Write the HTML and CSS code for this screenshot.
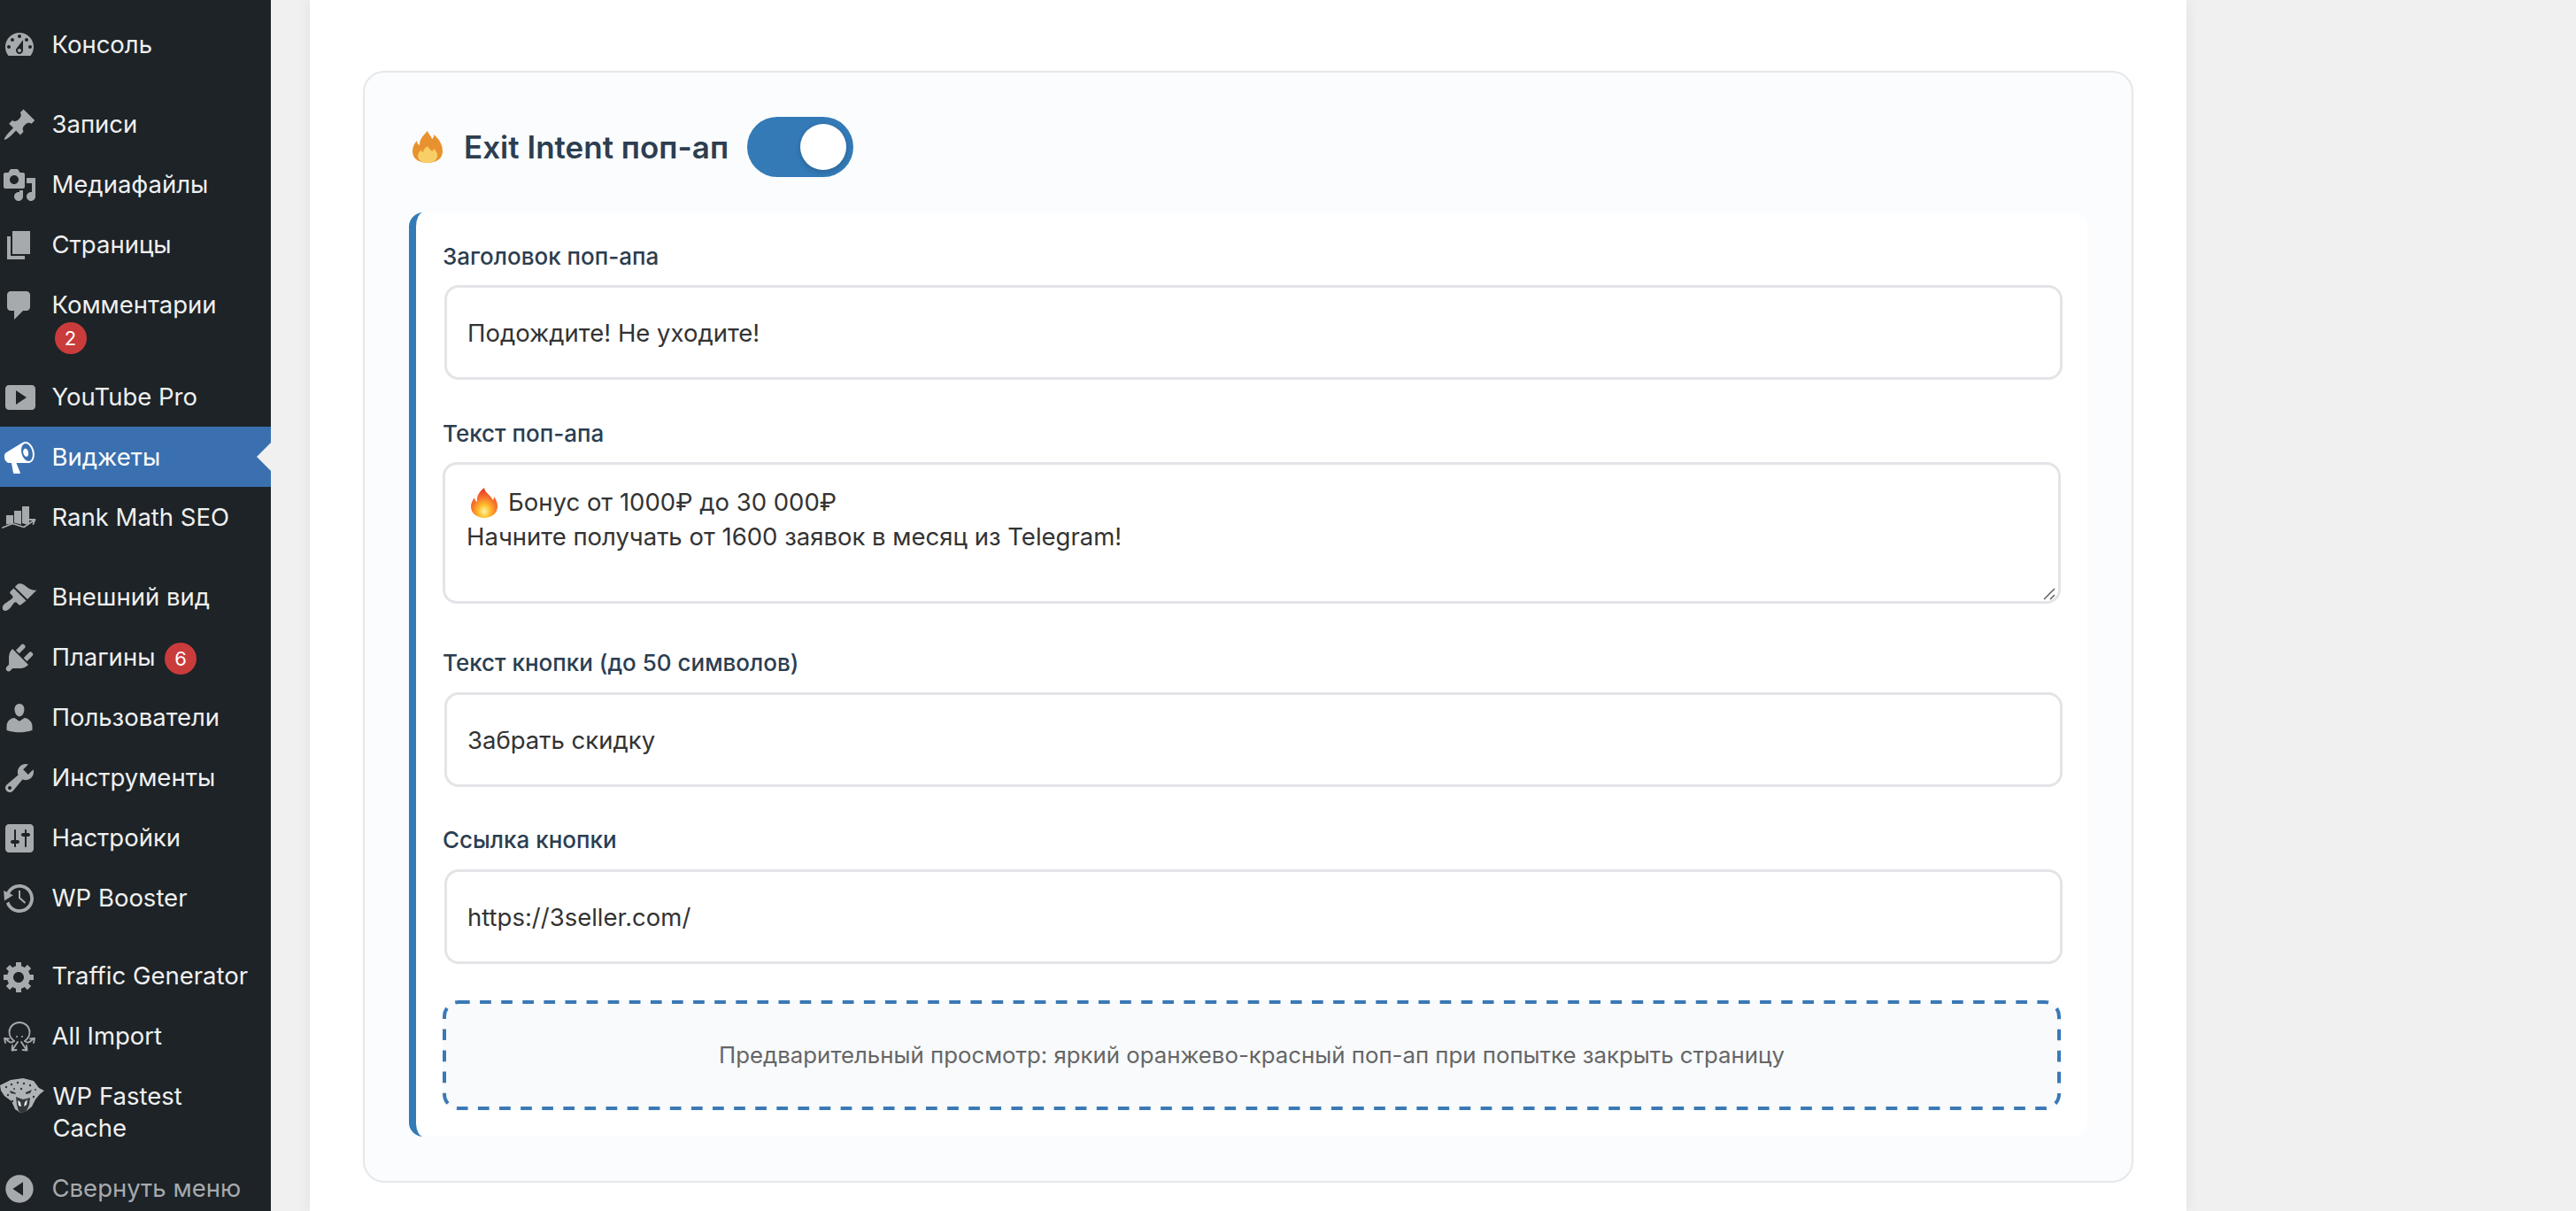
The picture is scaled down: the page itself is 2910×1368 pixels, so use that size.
FILE: index.html
```html
<!DOCTYPE html>
<html lang="ru">
<head>
<meta charset="utf-8">
<title>Exit Intent поп-ап</title>
<link rel="stylesheet" href="styles.css">
</head>
<body>
<div class="page">
  <nav class="sidebar">
    <a class="item"><svg class="icon" viewBox="0 0 20 20"><path d="M3.76 16h12.48c1.1-1.37 1.76-3.11 1.76-5 0-4.42-3.58-8-8-8s-8 3.58-8 8c0 1.89.66 3.63 1.76 5zM10 4c.55 0 1 .45 1 1s-.45 1-1 1-1-.45-1-1 .45-1 1-1zM6 6c.55 0 1 .45 1 1s-.45 1-1 1-1-.45-1-1 .45-1 1-1zm8 0c.55 0 1 .45 1 1s-.45 1-1 1-1-.45-1-1 .45-1 1-1zm-5.37 5.55L12 7v6c0 1.1-.9 2-2 2s-2-.9-2-2c0-.57.24-1.08.63-1.45zM4 10c.55 0 1 .45 1 1s-.45 1-1 1-1-.45-1-1 .45-1 1-1zm12 0c.55 0 1 .45 1 1s-.45 1-1 1-1-.45-1-1 .45-1 1-1zm-5 3c0-.55-.45-1-1-1s-1 .45-1 1 .45 1 1 1 1-.45 1-1z"/></svg><span class="label">Консоль</span></a>
    <div class="sep-a"></div>
    <a class="item"><svg class="icon" viewBox="0 0 20 20"><path d="M10.44 3.02l1.82-1.82 6.36 6.35-1.83 1.82c-1.05-.68-2.48-.57-3.41.36l-.75.75c-.92.93-1.04 2.35-.35 3.41l-1.83 1.82-2.41-2.41-2.8 2.79c-.42.42-3.38 2.71-3.8 2.29s1.86-3.39 2.28-3.81l2.79-2.79L4.1 9.36l1.83-1.82c1.05.69 2.48.57 3.4-.36l.75-.75c.93-.92 1.05-2.35.36-3.41z"/></svg><span class="label">Записи</span></a>
    <a class="item"><svg class="icon" viewBox="0 0 20 20"><path d="M13 11V4c0-.55-.45-1-1-1h-1.67L9 1H5L3.67 3H2c-.55 0-1 .45-1 1v7c0 .55.45 1 1 1h10c.55 0 1-.45 1-1zM7 4.500c1.380 0 2.500 1.120 2.500 2.500S8.380 9.500 7 9.500 4.500 8.380 4.500 7 5.620 4.500 7 4.500zM14 6h5v10.500c0 1.380-1.120 2.500-2.500 2.500S14 17.880 14 16.500s1.120-2.500 2.500-2.500c.17 0 .34.02.5.05V9h-3V6zm-4 8.050V13h2v3.500c0 1.380-1.120 2.500-2.500 2.500S7 17.880 7 16.500 8.120 14 9.500 14c.17 0 .34.02.5.05z"/></svg><span class="label">Медиафайлы</span></a>
    <a class="item"><svg class="icon" viewBox="0 0 20 20"><path d="M6 15V2h10v13H6zm-1 1h8v2H3V5h2v11z"/></svg><span class="label">Страницы</span></a>
    <a class="item"><svg class="icon" viewBox="0 0 20 20"><path d="M5 2h9c1.100 0 2 .9 2 2v7c0 1.100-.9 2-2 2h-2l-5 5v-5H5c-1.100 0-2-.9-2-2V4c0-1.100.9-2 2-2z"/></svg><span class="label">Комментарии <span class="badge">2</span></span></a>
    <a class="item"><svg class="icon" viewBox="0 0 20 20"><path d="M19 15V5c0-1.100-.9-2-2-2H4c-1.100 0-2 .9-2 2v10c0 1.100.9 2 2 2h13c1.100 0 2-.9 2-2zM8 14V6l6 4z"/></svg><span class="label">YouTube Pro</span></a>
    <a class="item current"><svg class="icon" viewBox="0 0 20 20"><path d="M18.150 5.940c.46 1.620.38 3.220-.02 4.480-.42 1.280-1.260 2.180-2.300 2.480-.16.06-.26.06-.4.06-.06.02-.12.02-.18.02-.06.02-.14.02-.22.02h-6.800l2.220 5.500c.02.14-.06.26-.14.34-.08.1-.24.16-.34.16H6.950c-.1 0-.26-.06-.34-.16-.08-.08-.16-.2-.14-.34l-1-5.500H4.250l-.02-.02c-.5.06-1.080-.18-1.540-.62s-.88-1.080-1.060-1.880c-.24-.8-.2-1.560-.02-2.200.18-.62.58-1.080 1.060-1.300l.02-.02 9-5.400c.1-.06.18-.1.24-.16.06-.04.14-.08.24-.12.16-.08.28-.12.5-.18 1.040-.3 2.240.1 3.220.98s1.840 2.240 2.260 3.860zm-2.580 5.980h-.02c.4-.1.74-.34 1.040-.7.58-.7.86-1.760.86-3.040-.02-.64-.1-1.300-.28-1.980-.34-1.360-1.020-2.500-1.780-3.240s-1.680-1.100-2.460-.88c-.82.22-1.400.96-1.700 2-.32 1.040-.28 2.360.06 3.720.38 1.360 1 2.500 1.800 3.240.78.74 1.620 1.100 2.480.88zm-2.540-7.080c.22-.04.42-.02.62.04.38.16.76.48 1.020 1s.42 1.200.42 1.780c0 .3-.04.56-.12.8-.18.48-.44.84-.86.94-.34.1-.8-.06-1.140-.4s-.64-.86-.78-1.500c-.18-.62-.12-1.240.02-1.720s.48-.84.82-.94z"/></svg><span class="label">Виджеты</span></a>
    <a class="item"><svg class="icon" viewBox="0 0 40 40"><path d="M5 17h8v9l-8 1.500zM14 12h8v15.500l-8-2zM23 7h8v19l-3 1.500-5-1.500z"/><path class="thin" d="M1 31l11-4.500 13 4 11-7.500M31.500 22h6l-2 5"/></svg><span class="label">Rank Math SEO</span></a>
    <div class="sep-b"></div>
    <a class="item"><svg class="icon" viewBox="0 0 20 20"><path d="M14.480 11.060L7.410 3.990l1.500-1.500c.5-.56 2.300-.47 3.510.32 1.210.8 1.430 1.280 2.910 2.100 1.180.64 2.450 1.260 4.450.85zm-.71.71L6.700 4.700 4.930 6.470c-.39.39-.39 1.020 0 1.410l1.060 1.060c.39.39.39 1.030 0 1.420-.6.6-1.430 1.110-2.210 1.690-.35.26-.7.53-1.010.84C1.430 13.230.4 14.850.4 15.820c0 .96.52 1.650 1.480 1.650.97 0 2.300-1 2.650-1.360.31-.31.58-.66.84-1.010.58-.78 1.090-1.610 1.690-2.210.39-.39 1.020-.39 1.410 0l1.060 1.060c.39.39 1.020.39 1.410 0z"/></svg><span class="label">Внешний вид</span></a>
    <a class="item"><svg class="icon" viewBox="0 0 20 20"><path d="M13.110 4.360L9.870 7.600 8 5.730l3.240-3.240c.35-.34 1.050-.2 1.560.32.52.51.66 1.210.31 1.550zm-8 1.770l.91-1.120 9.010 9.010-1.190.84c-.71.71-2.630 1.160-3.820 1.160H6.140L4.900 17.260c-.59.59-1.540.59-2.120 0-.59-.58-.59-1.530 0-2.120l1.240-1.240v-3.880c0-1.130.4-3.190 1.090-3.890zm7.260 3.970l3.240-3.240c.34-.35 1.040-.21 1.550.31.52.51.66 1.210.31 1.550l-3.240 3.250z"/></svg><span class="label">Плагины <span class="badge">6</span></span></a>
    <a class="item"><svg class="icon" viewBox="0 0 20 20"><path d="M10 9.250c-2.270 0-2.730-3.440-2.730-3.440C7 4.020 7.820 2 9.970 2c2.160 0 2.980 2.020 2.710 3.810 0 0-.41 3.440-2.680 3.440zm0 2.570L12.720 10c2.390 0 4.520 2.330 4.520 4.530v2.490s-3.650 1.130-7.240 1.130c-3.650 0-7.240-1.130-7.240-1.130v-2.490c0-2.250 1.940-4.480 4.470-4.480z"/></svg><span class="label">Пользователи</span></a>
    <a class="item"><svg class="icon" viewBox="0 0 20 20"><path d="M16.680 9.770c-1.340 1.340-3.300 1.670-4.950.99l-5.410 6.520c-.99.99-2.590.99-3.580 0s-.99-2.59 0-3.570l6.520-5.420c-.68-1.650-.35-3.610.99-4.950 1.280-1.280 3.120-1.620 4.720-1.060l-2.890 2.890 2.820 2.820 2.860-2.870c.53 1.580.18 3.390-1.080 4.650zM3.810 16.210c.4.39 1.040.39 1.430 0 .4-.4.4-1.040 0-1.430-.39-.4-1.030-.4-1.430 0-.39.39-.39 1.030 0 1.430z"/></svg><span class="label">Инструменты</span></a>
    <a class="item"><svg class="icon" viewBox="0 0 20 20"><path d="M18 16V4c0-1.100-.9-2-2-2H4c-1.100 0-2 .9-2 2v12c0 1.100.9 2 2 2h12c1.100 0 2-.9 2-2zM8 11h1c.55 0 1 .45 1 1s-.45 1-1 1H8v1.500c0 .28-.22.5-.5.5s-.5-.22-.5-.5V13H6c-.55 0-1-.45-1-1s.45-1 1-1h1V5.500c0-.28.22-.5.5-.5s.5.22.5.5V11zm5-2h-1c-.55 0-1-.45-1-1s.45-1 1-1h1V5.500c0-.28.22-.5.5-.5s.5.22.5.5V7h1c.55 0 1 .45 1 1s-.45 1-1 1h-1v5.500c0 .28-.22.5-.5.5s-.5-.22-.5-.5V9z"/></svg><span class="label">Настройки</span></a>
    <a class="item"><svg class="icon" viewBox="0 0 20 20"><path d="M13.650 2.880c3.930 2.010 5.480 6.840 3.470 10.770s-6.830 5.480-10.770 3.470c-1.870-.96-3.200-2.560-3.860-4.400l1.640-1.030c.45 1.570 1.520 2.950 3.080 3.760 3.010 1.540 6.690.35 8.230-2.660 1.550-3.010.36-6.690-2.650-8.240C9.780 3.010 6.100 4.200 4.560 7.210l1.880.97-4.950 3.080-.39-5.820 1.780.91C4.890 2.420 9.720.87 13.650 2.880zM9.500 5.500h1v3.900l3.100 2.700-.7.750-3.400-3z"/></svg><span class="label">WP Booster</span></a>
    <div class="sep-c"></div>
    <a class="item"><svg class="icon" viewBox="0 0 20 20"><path d="M18 12h-2.180c-.17.7-.44 1.350-.81 1.930l1.540 1.540-2.100 2.100-1.540-1.540c-.58.36-1.230.63-1.910.79V19H8v-2.180c-.68-.16-1.330-.43-1.910-.79l-1.540 1.540-2.120-2.120 1.540-1.540c-.36-.58-.63-1.230-.79-1.910H1V9.030h2.170c.16-.7.44-1.350.8-1.940L2.430 5.550l2.100-2.100 1.540 1.540c.58-.37 1.240-.64 1.930-.81V2h3v2.180c.68.16 1.330.43 1.910.79l1.540-1.540 2.120 2.120-1.540 1.540c.36.59.64 1.240.8 1.940H18V12zm-8.500 1.500c1.660 0 3-1.340 3-3s-1.340-3-3-3-3 1.340-3 3 1.340 3 3 3z"/></svg><span class="label">Traffic Generator</span></a>
    <a class="item"><svg class="icon" viewBox="0 0 40 40"><g class="thin"><path d="M14 25c-4-3-5.500-6-5.500-10C8.500 9 13.500 4 20 4s11.500 5 11.500 11c0 4-1.500 7-5.500 10"/><path d="M14 25c-2 2.500-6 2-10-3M26 25c2 2.500 6 2 10-3M4 27l-1-5 5 .5M36 27l1-5-5 .5M18 26l-6 9M22 26l6 9M12 30l-.5 5.500 5-.5M28 30l.5 5.500-5-.5"/></g><circle cx="17" cy="20" r="1"/><circle cx="23" cy="20" r="1"/></svg><span class="label">All Import</span></a>
    <a class="item"><svg class="icon cat" viewBox="0 0 50 44"><path class="cat-fur" d="M0 9l12-6 14-2 12 3 6 8 6 3-5 4-5 6-4 8-6 5-7 2-6-4-4-9-8-6-4-6z"/><path class="cat-dark" d="M18 22l8 3 8-2-1 8-3 7-5 3-4-3-2-7zM11 15l6 2 1 2-6-1zM29 17l7-3-2 4-5 1z"/><path class="cat-light" d="M20 26l3 2 1 5-3-1zM31 25l-3 3-1 5 3-2z"/><g class="cat-dark"><circle cx="7" cy="11" r="1.200"/><circle cx="13" cy="8" r="1.200"/><circle cx="20" cy="6" r="1.200"/><circle cx="27" cy="7" r="1.200"/><circle cx="34" cy="9" r="1.200"/><circle cx="9" cy="20" r="1.200"/><circle cx="14" cy="27" r="1.200"/><circle cx="24" cy="13" r="1.200"/><circle cx="38" cy="22" r="1.200"/><circle cx="16" cy="13" r="1"/><circle cx="40" cy="14" r="1"/></g></svg><span class="label">WP Fastest Cache</span></a>
    <a class="item muted"><svg class="icon" viewBox="0 0 20 20"><path d="M10 2.160c4.330 0 7.840 3.510 7.840 7.840s-3.510 7.840-7.840 7.840S2.160 14.330 2.160 10 5.710 2.160 10 2.160zm2 11.720V6.120L6.180 9.960z"/></svg><span class="label">Свернуть меню</span></a>
  </nav>
  <main class="main">
    <div class="card">
      <section class="panel">
        <header class="panel-head">
          <svg class="head-flame" viewBox="0 0 34 36"><path class="flame-o" d="M17 0c1 4 4 5 5 9 2-1 2-3 2-5 6 5 10 11 10 19 0 8-7 13-17 13S0 31 0 23c0-5 2-9 5-12 0 3 1 4 3 5 0-7 4-11 9-16z"/><path class="flame-y" d="M17 17c1 3 4 4 5 6 1-1 2-2 2-3 3 3 4 5 4 8 0 5-5 8-11 8S6 33 6 28c0-3 2-5 4-7 0 2 1 3 2 3 0-3 2-5 5-7z"/></svg>
          <h2 class="panel-title">Exit Intent поп-ап</h2>
          <span class="toggle"><span class="thumb"></span></span>
        </header>
        <div class="box">
          <div class="field field-1">
            <div class="field-label">Заголовок поп-апа</div>
            <div class="input">Подождите! Не уходите!</div>
          </div>
          <div class="field field-2">
            <div class="field-label">Текст поп-апа</div>
            <div class="textarea">
              <div class="line line-first"><svg class="text-flame" viewBox="0 0 30 34"><defs><radialGradient id="fg" cx="50%" cy="78%" r="70%"><stop offset="0" stop-color="#fff3a8"/><stop offset=".3" stop-color="#ffc02e"/><stop offset=".65" stop-color="#f7762a"/><stop offset="1" stop-color="#ea3f26"/></radialGradient></defs><path fill="url(#fg)" d="M15 0c1 6 7 8 10 14 1-1 1-3 1-4 3 4 4 8 4 11 0 8-7 13-15 13S0 29 0 21c0-4 2-7 4-10 0 2 1 4 3 5C6 9 10 4 15 0z"/></svg><span>Бонус от 1000₽ до 30 000₽</span></div>
              <div class="line">Начните получать от 1600 заявок в месяц из Telegram!</div>
              <svg class="resizer" viewBox="0 0 14 14"><path d="M1 13L13 1M8 13l5-5"/></svg>
            </div>
          </div>
          <div class="field field-3">
            <div class="field-label">Текст кнопки (до 50 символов)</div>
            <div class="input">Забрать скидку</div>
          </div>
          <div class="field field-4">
            <div class="field-label">Ссылка кнопки</div>
            <div class="input">https://3seller.com/</div>
          </div>
          <div class="preview">
            <svg class="dash" viewBox="0 0 1828 124"><rect x="2" y="2" width="1824" height="120" rx="16" ry="16"/></svg>
            Предварительный просмотр: яркий оранжево-красный поп-ап при попытке закрыть страницу
          </div>
        </div>
      </section>
    </div>
  </main>
</div>
</body>
</html>
```
FILE: styles.css
```css
* { box-sizing: border-box; }
html, body { margin: 0; height: 100%; overflow: hidden; }
body { background: #f0f0f0; font-family: Inter, "Liberation Sans", sans-serif; }
.page { display: flex; height: 1368px; overflow: hidden; }

.sidebar { width: 306px; flex: none; height: 1368px; overflow: hidden; background: #1d2327; padding-top: 16px; }
.item { position: relative; display: flex; align-items: flex-start; gap: 16.5px; padding: 16px 0 16px 2px; color: #f0f0f0; font-size: 27.5px; line-height: 36px; }
.icon { width: 40px; height: 40px; flex: none; margin: -1px 0 -3px; fill: #a7aaad; }
.thin { fill: none; stroke: #a7aaad; stroke-width: 1.8; stroke-linecap: round; stroke-linejoin: round; }
.label { display: block; max-width: 224px; }
.badge { display: inline-block; width: 36px; height: 36px; margin: 2px 0 -2px 3px; border-radius: 50%; background: #c93c3b; color: #fff; font-size: 22px; line-height: 36px; text-align: center; vertical-align: top; }
.current { background: #3a70b0; color: #fff; }
.current .icon { fill: #fff; }
.current::after { content: ""; position: absolute; right: 0; top: 18px; border: 16px solid transparent; border-right-color: #f0f0f0; border-left-width: 0; }
.muted { color: #a7aaad; }
.sep-a { height: 22px; }
.sep-b { height: 22px; }
.sep-c { height: 20px; }
.cat { width: 50px; height: 44px; margin: -3px -7px -5px -2px; }
.cat-fur { fill: #b0b3b5; }
.cat-dark { fill: #33383c; }
.cat-light { fill: #e8e8e8; }

.main { flex: 1; padding-left: 44px; }
.card { width: 2120px; height: 1368px; padding: 80px 60px 0; background: #fff; box-shadow: 0 0 16px rgba(0, 0, 0, .07); }
.panel { height: 1256px; padding: 50px; background: #fafcfe; border: 2px solid #e5e7eb; border-radius: 24px; }
.panel-head { display: flex; align-items: center; height: 68px; margin-bottom: 40px; }
.head-flame { width: 34px; height: 36px; margin: 0 24px 0 4px; flex: none; }
.flame-o { fill: #e8922f; }
.flame-y { fill: #f8cf66; }
.panel-title { width: 299px; margin: 0 21px 0 0; color: #2c3e50; font-size: 35px; font-weight: 600; line-height: 44px; white-space: nowrap; }
.toggle { position: relative; display: block; width: 120px; height: 68px; border-radius: 34px; background: #337ab7; }
.thumb { position: absolute; top: 8px; right: 8px; width: 52px; height: 52px; border-radius: 50%; background: #fff; box-shadow: 0 2px 6px rgba(0, 0, 0, .2); }

.box { padding: 33px 30px 30px; background: #fff; border-left: 8px solid #337ab7; border-radius: 16px; }
.field-label { color: #2c3e50; font-size: 26px; font-weight: 500; line-height: 34px; }
.field-1 { margin-bottom: 44px; }
.field-2 { margin-bottom: 50px; }
.field-3 { margin-bottom: 43px; }
.field-4 { margin-bottom: 41px; }
.input { width: 100%; height: 107px; margin: 15px 0 0 2px; padding: 0 23px; background: #fff; border: 3px solid #e2e4e7; border-radius: 16px; color: #333; font-size: 27.5px; line-height: 103px; }
.field-3 .input { margin-top: 16px; }
.field-4 .input { margin-top: 16px; }
.textarea { position: relative; height: 160px; margin-top: 15px; padding: 23px 24px 0; background: #fff; border: 3px solid #e2e4e7; border-radius: 16px; color: #333; font-size: 27.5px; line-height: 39px; }
.line-first { display: flex; align-items: center; }
.text-flame { width: 30px; height: 34px; margin: 0 12px 0 5px; flex: none; }
.resizer { position: absolute; right: 3px; bottom: 1px; width: 14px; height: 14px; fill: none; stroke: #666; stroke-width: 1.6; }
.preview { position: relative; height: 124px; background: #f8fafc; border-radius: 18px; color: #666; font-size: 25.8px; line-height: 124px; text-align: center; white-space: nowrap; }
.dash { position: absolute; left: 0; top: 0; width: 1828px; height: 124px; }
.dash rect { fill: none; stroke: #3a79b5; stroke-width: 4; stroke-dasharray: 12.7 11.4; }
```
